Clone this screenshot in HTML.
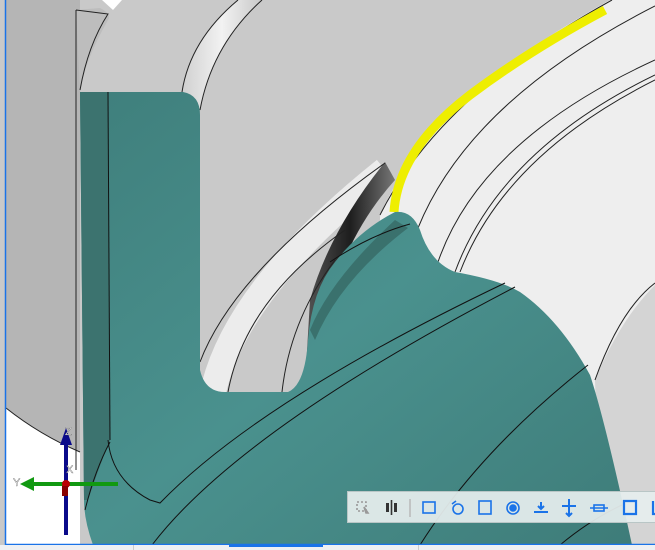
<!DOCTYPE html>
<html><head><meta charset="utf-8"><style>
html,body{margin:0;padding:0;width:655px;height:550px;overflow:hidden;background:#fff;font-family:"Liberation Sans",sans-serif}
svg{display:block;position:absolute;left:0;top:0}
.tb{position:absolute;left:347px;top:491px;width:320px;height:32px;background:rgba(230,238,238,0.93);border:1px solid #b9c6c6;box-sizing:border-box}
.bot{position:absolute;left:0;top:545px;width:655px;height:5px;background:#eef0f3}
</style></head><body>
<svg width="655" height="550" viewBox="0 0 655 550">
<defs>
<linearGradient id="tl" x1="0" y1="0" x2="1" y2="1">
<stop offset="0" stop-color="#3f7f7c"/><stop offset="0.5" stop-color="#4a918e"/><stop offset="1" stop-color="#3e7c79"/></linearGradient>
<linearGradient id="band" x1="0" y1="0" x2="1" y2="0">
<stop offset="0" stop-color="#d0d0d0"/><stop offset="0.5" stop-color="#f2f2f2"/><stop offset="1" stop-color="#c8c8c8"/></linearGradient>
<linearGradient id="dk" x1="0" y1="0" x2="1" y2="0">
<stop offset="0" stop-color="#555"/><stop offset="0.5" stop-color="#1e1e1e"/><stop offset="1" stop-color="#777"/></linearGradient>
</defs>
<rect width="655" height="550" fill="#c9c9c9"/>
<!-- left panel -->
<rect x="6" y="0" width="74" height="545" fill="#b5b5b5"/>
<path d="M6 408 Q40 435 80 452 L80 545 L6 545Z" fill="#fff"/>
<path d="M6 408 Q40 435 80 452" stroke="#222" fill="none" stroke-width="1"/>
<!-- top face -->
<path d="M76 10 L100 8 Q112 14 108 20 Q85 60 80 92Z" fill="#bdbdbd"/>
<path d="M76 10 L76 470" stroke="#222" stroke-width="1" fill="none"/>
<path d="M102 0 L113 10 L122 0Z" fill="#fff"/>
<path d="M76 10 L108 14 Q88 45 80 90" stroke="#222" fill="none"/>
<!-- top white torus band -->
<path d="M182 92 Q190 40 238 0 L262 0 Q215 40 200 110 L195 100Z" fill="url(#band)"/>
<path d="M182 92 Q190 40 238 0 M200 110 Q212 45 262 0" stroke="#222" fill="none"/>
<!-- right white rings -->
<path d="M380 215 Q430 100 610 0 L655 0 L655 545 L380 545 Z" fill="#eeeeee"/>
<path d="M600 545 L595 380 Q620 320 655 285 L655 545Z" fill="#d4d4d4"/>
<path d="M380 215 Q440 95 612 0" stroke="#222" fill="none"/>
<path d="M418 228 Q470 100 655 6" stroke="#222" fill="none"/>
<path d="M438 262 Q480 140 655 60" stroke="#222" fill="none"/>
<path d="M455 272 Q500 150 655 75 M460 272 Q505 155 655 80" stroke="#222" fill="none"/>
<path d="M595 380 Q620 310 655 283" stroke="#222" fill="none"/>
<!-- yellow -->
<path d="M394 212 Q398 150 470 95 Q530 50 605 10" stroke="#eeee00" stroke-width="9" fill="none"/>
<!-- lower band -->
<path d="M213 392 Q235 290 385 170" stroke="#ececec" stroke-width="26" fill="none"/>
<path d="M385 162 Q330 230 310 300 L305 385 L330 300 Q350 230 395 180Z" fill="url(#dk)"/>
<path d="M200 362 Q235 270 385 163" stroke="#222" fill="none"/>
<path d="M228 392 Q245 300 345 230" stroke="#222" fill="none"/>
<path d="M282 392 Q290 320 335 260" stroke="#222" fill="none"/>
<!-- teal -->
<path d="M80 92 L183 92 Q200 95 200 115 L200 370 Q205 392 225 392 L288 392 Q305 385 308 340 Q312 290 335 262 Q360 230 395 212 Q412 210 420 230 Q430 262 455 272 Q500 280 520 292 Q560 320 590 375 Q605 420 632 545 L93 545 Q84 520 84 500 Z" fill="url(#tl)"/>
<path d="M80 92 L108 92 L110 440 Q98 470 88 500 L84 500Z" fill="#3c736f"/>
<path d="M310 330 Q330 280 395 220 L408 228 Q340 280 315 340Z" fill="#3a716d"/>
<path d="M108 92 L110 440" stroke="#111" fill="none"/>
<path d="M108 440 Q112 480 150 500 L160 503 Q260 400 505 283" stroke="#111" fill="none"/>
<path d="M110 442 Q95 470 85 510" stroke="#111" fill="none"/>
<path d="M152 545 Q240 430 515 287" stroke="#111" fill="none"/>
<path d="M330 262 Q370 235 410 224" stroke="#111" fill="none"/>
<path d="M420 545 Q480 450 588 365" stroke="#111" fill="none"/>
<path d="M560 545 Q590 520 622 505" stroke="#111" fill="none"/>
<!-- triad -->
<rect x="64" y="440" width="4" height="95" fill="#0a0a8a"/>
<path d="M60 445 L66 428 L72 445Z" fill="#0a0a8a"/>
<rect x="30" y="482" width="88" height="4" fill="#119911"/>
<path d="M34 477 L20 484 L34 491Z" fill="#119911"/>
<circle cx="66" cy="484" r="4" fill="#b00"/>
<rect x="62" y="486" width="6" height="10" fill="#800"/>
<text x="65" y="435" font-size="11" fill="#fff" stroke="#444" stroke-width="0.3">Z</text>
<text x="66" y="473" font-size="11" fill="#fff" stroke="#444" stroke-width="0.3">X</text>
<text x="13" y="486" font-size="11" fill="#fff" stroke="#444" stroke-width="0.3">Y</text>
<!-- frame -->
<rect x="5.5" y="-2" width="660" height="546.5" fill="none" stroke="#1a73e8" stroke-width="1.5"/>
</svg>
<div class="tb">
<svg width="320" height="32" viewBox="0 0 320 32" style="position:static">
<g fill="none" stroke="#1a73e8" stroke-width="1.6">
<rect x="9" y="10" width="9" height="9" stroke="#999" stroke-dasharray="2,2"/>
<path d="M16 15 L20 21 L18 21Z" fill="#999" stroke="#999"/>
<rect x="38" y="11" width="3" height="9" fill="#333" stroke="none"/><rect x="46" y="11" width="3" height="9" fill="#333" stroke="none"/><path d="M43.5 8 V23" stroke="#333"/>
<path d="M62 7 V25" stroke="#bbb"/>
<rect x="75" y="10" width="12" height="11"/>
<circle cx="110" cy="17" r="5"/><path d="M104 12 l4 -3"/>
<rect x="131" y="9" width="12" height="13"/>
<circle cx="165" cy="16" r="6"/><circle cx="165" cy="16" r="3" fill="#1a73e8"/>
<path d="M186 20 H200 M193 10 V17 M190 14 l3 3 3-3" stroke-width="2"/>
<path d="M214 14 H228 M221 7 V24 M218 21 l3 3 3-3" stroke-width="2"/>
<rect x="246" y="13" width="10" height="6"/><path d="M242 16 H260"/>
<path d="M276 9 H288 V22 H276 Z" stroke-width="2.2"/>
<path d="M305 9 V22 H318" stroke-width="2.2"/>
</g></svg></div>
<div class="bot"><div style="position:absolute;left:133px;top:0;width:1px;height:5px;background:#ccc"></div><div style="position:absolute;left:229px;top:0;width:94px;height:2px;background:#1a73e8"></div><div style="position:absolute;left:418px;top:0;width:1px;height:5px;background:#ccc"></div></div>
</body></html>
